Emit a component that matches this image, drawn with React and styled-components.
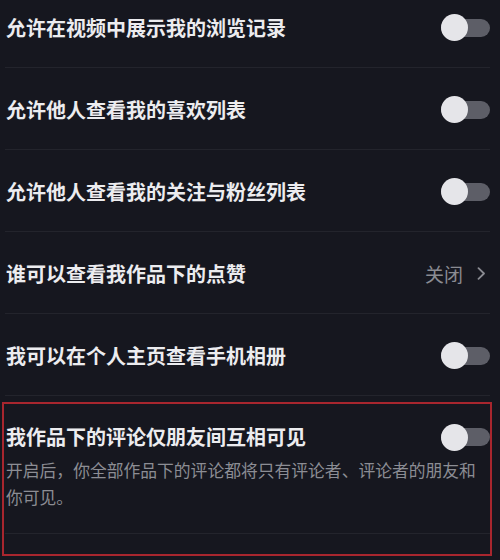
import React from "react";
import styled, { createGlobalStyle } from "styled-components";

const GlobalStyle = createGlobalStyle`
  html, body {
    margin: 0;
    padding: 0;
    background: #16171f;
    overflow: hidden;
  }
  body {
    font-family: "Noto Sans CJK SC", "Noto Sans", sans-serif;
  }
`;

const Page = styled.div`
  width: 500px;
  height: 560px;
  background: #16171f;
  overflow: hidden;
  box-sizing: border-box;
  padding: 0 10px 0 5px;
`;

const List = styled.div`
  display: flex;
  flex-direction: column;
  margin-top: -14px;
`;

const Row = styled.div`
  height: 82px;
  box-sizing: border-box;
  display: flex;
  align-items: center;
  justify-content: space-between;
  border-bottom: 1px solid #23242c;
  padding: 2px 0 0 1px;
`;

const Title = styled.div`
  font-size: 20px;
  line-height: 28px;
  font-weight: 700;
  color: #ececef;
  white-space: nowrap;
`;

const Track = styled.div`
  width: 49px;
  height: 18px;
  border-radius: 9px;
  background: #5d5e67;
  flex-shrink: 0;
  display: flex;
  align-items: center;
`;

const Knob = styled.div`
  width: 27px;
  height: 27px;
  border-radius: 50%;
  background: #e5e5e9;
  flex-shrink: 0;
  margin-left: ${(p) => (p.$on ? "22px" : "0")};
`;

const Value = styled.div`
  display: flex;
  align-items: center;
  gap: 14px;
  color: #8a8b92;
  font-size: 19px;
  line-height: 28px;
  padding-right: 4px;
`;

const HighlightRow = styled.div`
  position: relative;
  box-sizing: border-box;
  padding: 27px 0 22px 1px;
  border-bottom: 1px solid #23242c;
  display: flex;
  flex-direction: column;
  gap: 6px;

  &::after {
    content: "";
    position: absolute;
    top: 6px;
    left: -3px;
    right: -2px;
    bottom: -23px;
    border: 2px solid #a8262e;
    pointer-events: none;
  }
`;

const HeaderLine = styled.div`
  display: flex;
  align-items: center;
  justify-content: space-between;
`;

const Desc = styled.div`
  font-size: 16.8px;
  line-height: 27px;
  color: #8c8d94;
  padding-right: 4px;
`;

function Toggle({ on }) {
  return (
    <Track>
      <Knob $on={on} />
    </Track>
  );
}

function Chevron() {
  return (
    <svg width="9" height="13" viewBox="0 0 9 13" fill="none">
      <polyline
        points="1.5,1.2 7,6.5 1.5,11.8"
        stroke="#8a8b92"
        strokeWidth="1.8"
        strokeLinecap="round"
        strokeLinejoin="round"
      />
    </svg>
  );
}

const items = [
  { label: "允许在视频中展示我的浏览记录", type: "toggle" },
  { label: "允许他人查看我的喜欢列表", type: "toggle" },
  { label: "允许他人查看我的关注与粉丝列表", type: "toggle" },
  { label: "谁可以查看我作品下的点赞", type: "value", value: "关闭" },
  { label: "我可以在个人主页查看手机相册", type: "toggle" },
];

export default function App() {
  return (
    <>
      <GlobalStyle />
      <Page>
        <List>
          {items.map((it) => (
            <Row key={it.label}>
              <Title>{it.label}</Title>
              {it.type === "toggle" ? (
                <Toggle on={false} />
              ) : (
                <Value>
                  {it.value}
                  <Chevron />
                </Value>
              )}
            </Row>
          ))}
          <HighlightRow>
            <HeaderLine>
              <Title>我作品下的评论仅朋友间互相可见</Title>
              <Toggle on={false} />
            </HeaderLine>
            <Desc>开启后，你全部作品下的评论都将只有评论者、评论者的朋友和你可见。</Desc>
          </HighlightRow>
        </List>
      </Page>
    </>
  );
}
